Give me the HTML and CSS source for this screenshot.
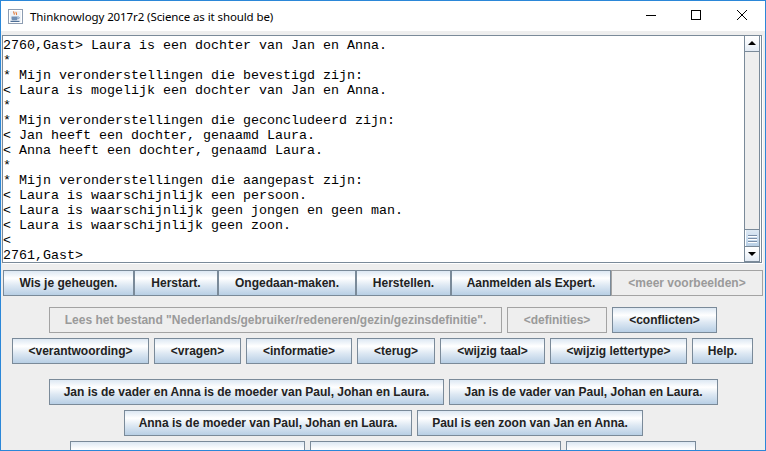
FILE: index.html
```html
<!DOCTYPE html>
<html lang="nl">
<head>
<meta charset="utf-8">
<title>Thinknowlogy 2017r2</title>
<link rel="stylesheet" href="styles.css">
</head>
<body>
<div class="window">
  <div class="titlebar">
    <svg class="app-icon" width="15" height="15" viewBox="0 0 15 15">
      <rect x="0.5" y="0.5" width="14" height="14" fill="#eef3f9" stroke="#8d9db2"/>
      <rect x="1.5" y="1.5" width="12" height="12" fill="none" stroke="#ffffff"/>
      <path d="M6 2.5c-1.2 1.2 1.2 1.8 0 3.2M8.3 3c-1 1 1 1.6 0 2.8" fill="none" stroke="#e0702a" stroke-width="1.1"/>
      <path d="M3.5 7.5h6v2.2c0 1-0.8 1.6-1.8 1.6H5.3c-1 0-1.8-0.6-1.8-1.6z" fill="#6f8fb5"/>
      <path d="M9.5 8h1.2c0.8 0 0.8 1.6 0 1.6H9.5" fill="none" stroke="#6f8fb5" stroke-width="0.9"/>
      <rect x="2.5" y="11.8" width="9" height="1.2" fill="#4f6f96"/>
    </svg>
    <span class="title">Thinknowlogy 2017r2 (Science as it should be)</span>
    <div class="controls">
      <span class="ctl">
        <svg width="46" height="30" viewBox="0 0 46 30"><rect x="19" y="14" width="10" height="1" fill="#000"/></svg>
      </span>
      <span class="ctl">
        <svg width="46" height="30" viewBox="0 0 46 30"><rect x="18.5" y="9.5" width="9" height="9" fill="none" stroke="#000"/></svg>
      </span>
      <span class="ctl">
        <svg width="46" height="30" viewBox="0 0 46 30"><path d="M18 9L28 19M28 9L18 19" stroke="#000" stroke-width="1"/></svg>
      </span>
    </div>
  </div>

  <div class="content">
    <div class="scrollpane">
<pre class="console">2760,Gast&gt; Laura is een dochter van Jan en Anna.
*
* Mijn veronderstellingen die bevestigd zijn:
&lt; Laura is mogelijk een dochter van Jan en Anna.
*
* Mijn veronderstellingen die geconcludeerd zijn:
&lt; Jan heeft een dochter, genaamd Laura.
&lt; Anna heeft een dochter, genaamd Laura.
*
* Mijn veronderstellingen die aangepast zijn:
&lt; Laura is waarschijnlijk een persoon.
&lt; Laura is waarschijnlijk geen jongen en geen man.
&lt; Laura is waarschijnlijk geen zoon.
&lt;
2761,Gast&gt;</pre>
      <div class="vscroll">
        <div class="sb-btn sb-up">
          <svg width="14" height="15" viewBox="0 0 14 15"><path d="M3 9h8L7 5z" fill="#000"/></svg>
        </div>
        <div class="sb-track">
          <div class="sb-thumb"><i></i><i></i><i></i></div>
        </div>
        <div class="sb-btn sb-down">
          <svg width="14" height="14" viewBox="0 0 14 14"><path d="M3 5h8L7 9z" fill="#000"/></svg>
        </div>
      </div>
    </div>

    <div class="row row1">
      <button class="btn">Wis je geheugen.</button>
      <button class="btn">Herstart.</button>
      <button class="btn">Ongedaan-maken.</button>
      <button class="btn">Herstellen.</button>
      <button class="btn">Aanmelden als Expert.</button>
      <button class="btn off">&lt;meer voorbeelden&gt;</button>
    </div>

    <div class="row row2">
      <button class="btn off">Lees het bestand "Nederlands/gebruiker/redeneren/gezin/gezinsdefinitie".</button>
      <button class="btn off">&lt;definities&gt;</button>
      <button class="btn">&lt;conflicten&gt;</button>
    </div>

    <div class="row row3">
      <button class="btn">&lt;verantwoording&gt;</button>
      <button class="btn">&lt;vragen&gt;</button>
      <button class="btn">&lt;informatie&gt;</button>
      <button class="btn">&lt;terug&gt;</button>
      <button class="btn">&lt;wijzig taal&gt;</button>
      <button class="btn">&lt;wijzig lettertype&gt;</button>
      <button class="btn">Help.</button>
    </div>

    <div class="row row4">
      <button class="btn">Jan is de vader en Anna is de moeder van Paul, Johan en Laura.</button>
      <button class="btn">Jan is de vader van Paul, Johan en Laura.</button>
    </div>

    <div class="row row5">
      <button class="btn">Anna is de moeder van Paul, Johan en Laura.</button>
      <button class="btn">Paul is een zoon van Jan en Anna.</button>
    </div>

    <div class="row row6">
      <button class="btn"></button>
      <button class="btn"></button>
      <button class="btn"></button>
    </div>
  </div>
</div>
</body>
</html>
```

FILE: styles.css
```css
html, body {
  margin: 0;
  padding: 0;
  background: #ffffff;
}

.window {
  box-sizing: border-box;
  width: 766px;
  height: 451px;
  border: 1px solid #2b87d8;
  display: flex;
  flex-direction: column;
  overflow: hidden;
  background: #eeeeee;
}

/* ---------- title bar ---------- */
.titlebar {
  height: 30px;
  flex: none;
  background: #ffffff;
  display: flex;
  align-items: center;
}

.app-icon {
  margin-left: 7px;
  flex: none;
  display: block;
}

.title {
  margin-left: 7px;
  font-family: "Noto Sans", "Open Sans", sans-serif;
  font-size: 11.5px;
  letter-spacing: -0.1px;
  color: #000000;
  white-space: nowrap;
}

.controls {
  margin-left: auto;
  display: flex;
  align-self: stretch;
}

.ctl {
  width: 46px;
  height: 30px;
  display: block;
}

.ctl svg {
  display: block;
}

/* ---------- content ---------- */
.content {
  flex: 1;
  display: flex;
  flex-direction: column;
  padding-top: 4px;
  background: #eeeeee;
  overflow: hidden;
}

.scrollpane {
  box-sizing: border-box;
  width: 760px;
  height: 228px;
  margin-left: 1px;
  flex: none;
  border: 1px solid #7a8a99;
  box-shadow: 1px 1px 0 #ffffff;
  background: #ffffff;
  display: flex;
}

.console {
  flex: 1;
  margin: 0;
  padding: 2px 0 0 0;
  font-family: "Liberation Mono", "Courier New", monospace;
  font-size: 13.333px;
  line-height: 15px;
  color: #000000;
  white-space: pre;
  overflow: hidden;
}

.vscroll {
  width: 14px;
  margin-right: 1px;
  border-left: 1px solid #7a8a99;
  border-right: 1px solid #7a8a99;
  display: flex;
  flex-direction: column;
  background: #eeeeee;
}

.sb-btn {
  flex: none;
  background: linear-gradient(to bottom, #ffffff 0%, #f4f7fb 50%, #e3ebf4 100%);
  display: flex;
  justify-content: center;
}

.sb-btn svg {
  display: block;
}

.sb-up {
  height: 15px;
  border-bottom: 1px solid #7a8a99;
}

.sb-down {
  height: 14px;
  border-top: 1px solid #7a8a99;
  border-bottom: 1px solid #7a8a99;
}

.sb-track {
  flex: 1;
  display: flex;
  flex-direction: column;
  justify-content: flex-end;
  background: #eeeeee;
}

.sb-thumb {
  box-sizing: border-box;
  height: 17px;
  border-top: 1px solid #7a8a99;
  background: linear-gradient(to bottom, #dde8f3 0%, #c8dbee 60%, #b8cfe5 100%);
  display: flex;
  flex-direction: column;
  align-items: center;
  padding-top: 5px;
  gap: 1px;
  box-shadow: inset 1px 0 0 #ffffff;
}

.sb-thumb i {
  display: block;
  width: 9px;
  height: 1px;
  background: #7a8ea8;
  box-shadow: 0 1px 0 #ffffff;
  margin-bottom: 1px;
}

/* ---------- button rows ---------- */
.row {
  display: grid;
  justify-content: center;
  column-gap: 5px;
  flex: none;
}

.row1 {
  margin-top: 7px;
  column-gap: 0;
  grid-template-columns: 131px 84px 138px 95px 160px 152px;
}

.row2 {
  margin-top: 11px;
  grid-template-columns: 453px 100px 105px;
}

.row3 {
  margin-top: 5px;
  padding-right: 1px;
  grid-template-columns: 137px 87px 106px 78px 105px 137px 61px;
}

.row4 {
  margin-top: 15px;
  padding-left: 1px;
  grid-template-columns: 395px 269px;
}

.row5 {
  margin-top: 5px;
  padding-left: 1px;
  grid-template-columns: 288px 226px;
}

.row6 {
  margin-top: 5px;
  grid-template-columns: 235px 251px 130px;
}

.btn {
  box-sizing: border-box;
  height: 26px;
  margin: 0;
  padding: 0;
  border: 1px solid #7a8a99;
  border-radius: 0;
  background: linear-gradient(to bottom, #dde8f3 0%, #ffffff 30%, #dde8f3 60%, #b8cfe5 100%);
  font-family: "Liberation Sans", Arial, sans-serif;
  font-weight: bold;
  font-size: 12px;
  color: #222222;
  white-space: nowrap;
  overflow: hidden;
  display: flex;
  align-items: center;
  justify-content: center;
  -webkit-appearance: none;
  appearance: none;
}

.btn.off {
  background: #eeeeee;
  border-color: #a3a3a3;
  color: #9a9a9a;
}
```
